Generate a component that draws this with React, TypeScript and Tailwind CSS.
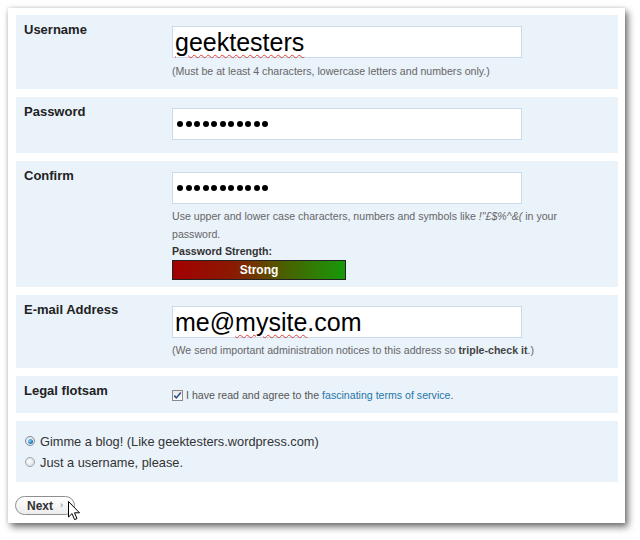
import React from 'react';

const font = { fontFamily: '"Liberation Sans", Arial, sans-serif' };

const Dots = ({ count }: { count: number }) => (
     <div className="flex items-center gap-[2.5px] pl-[4px]">
          {Array.from({ length: count }).map((_, i) => (
               <span key={i} className="block h-[6px] w-[6px] rounded-full bg-black" />
          ))}
     </div>
);

const Field = ({ children }: { children: React.ReactNode }) => (
     <div className="flex h-[32px] w-[350px] items-center border border-[#c9dbea] bg-white">
          {children}
     </div>
);

const Section = ({
     label,
     height,
     children,
}: {
     label?: string;
     height: string;
     children: React.ReactNode;
}) => (
     <div className={`flex bg-[#eaf2fa] pt-[10px] ${height}`}>
          {label !== undefined && (
               <div className="-mt-[3px] w-[156px] pl-[8px] text-[13px] font-bold leading-[15px] text-[#222]">
                    {label}
               </div>
          )}
          <div className="flex flex-col pt-[1px]">{children}</div>
     </div>
);

const Squiggle = ({ children }: { children: React.ReactNode }) => (
     <span className="underline decoration-[#e23c3c] decoration-wavy decoration-[1px] underline-offset-[3px]">
          {children}
     </span>
);

export default function App() {
     return (
          <div className="h-[540px] w-[640px] bg-white pl-[8px] pt-[8px]" style={font}>
               <div className="h-[515px] w-[617px] bg-white pl-[8px] pr-[7px] pt-[7px] shadow-[3px_4px_7px_rgba(0,0,0,0.55),0_0_4px_rgba(0,0,0,0.15)]">
                    <div className="flex flex-col gap-[8px]">
                         <Section label="Username" height="h-[74px]">
                              <Field>
                                   <span className="pl-[2px] text-[25px] leading-none text-black">
                                        <Squiggle>geektesters</Squiggle>
                                   </span>
                              </Field>
                              <p className="mt-[4px] text-[10.6px] leading-[18px] text-[#666]">
                                   (Must be at least 4 characters, lowercase letters and numbers only.)
                              </p>
                         </Section>

                         <Section label="Password" height="h-[56px]">
                              <Field>
                                   <Dots count={11} />
                              </Field>
                         </Section>

                         <Section label="Confirm" height="h-[126px]">
                              <Field>
                                   <Dots count={11} />
                              </Field>
                              <p className="mt-[3px] text-[10.6px] leading-[18px] text-[#666]">
                                   Use upper and lower case characters, numbers and symbols like{' '}
                                   <i>!"£$%^&amp;(</i> in your
                                   <br />
                                   password.
                              </p>
                              <p className="text-[10.6px] font-bold leading-[17px] text-[#333]">
                                   Password Strength:
                              </p>
                              <div className="flex h-[20px] w-[174px] items-center justify-center border border-[#222] bg-[linear-gradient(to_right,#a30000_0%,#8a1a00_35%,#4a6000_65%,#169a08_100%)] text-[12px] font-bold text-white">
                                   Strong
                              </div>
                         </Section>

                         <Section label="E-mail Address" height="h-[73px]">
                              <Field>
                                   <span className="pl-[2px] text-[25px] leading-none text-black">
                                        me@<Squiggle>mysite</Squiggle>.com
                                   </span>
                              </Field>
                              <p className="mt-[3px] text-[10.6px] leading-[18px] text-[#666]">
                                   (We send important administration notices to this address so{' '}
                                   <b className="text-[#444]">triple-check it</b>.)
                              </p>
                         </Section>

                         <Section label="Legal flotsam" height="h-[37px]">
                              <div className="flex items-center pt-[1px]">
                                   <span className="flex h-[11px] w-[11px] items-center justify-center border border-[#8a8a8a] bg-[linear-gradient(#e8e8e8,#ffffff)]">
                                        <svg width="9" height="9" viewBox="0 0 9 9">
                                             <path d="M1.2 4.6 L3.4 6.9 L7.8 1.6" fill="none" stroke="#2b4f8e" strokeWidth="1.6" />
                                        </svg>
                                   </span>
                                   <span className="ml-[3px] text-[10.6px] leading-[14px] text-[#555]">
                                        I have read and agree to the{' '}
                                        <span className="text-[#2676a8]">fascinating terms of service</span>.
                                   </span>
                              </div>
                         </Section>

                         <div className="flex h-[61px] flex-col justify-center gap-[6px] bg-[#eaf2fa] pl-[9px] text-[12.8px] leading-[15px] text-[#333]">
                              <label className="flex items-center gap-[5px]">
                                   <span className="flex h-[10px] w-[10px] items-center justify-center rounded-full border border-[#7d8d9c] bg-[radial-gradient(circle,#ffffff,#d8dde2)]">
                                        <span className="h-[5px] w-[5px] rounded-full bg-[radial-gradient(circle_at_35%_35%,#7fd0ff,#0a4f8f)]" />
                                   </span>
                                   Gimme a blog! (Like geektesters.wordpress.com)
                              </label>
                              <label className="flex items-center gap-[5px]">
                                   <span className="h-[10px] w-[10px] rounded-full border border-[#9aa3ab] bg-[radial-gradient(circle_at_40%_40%,#ffffff,#d0d4d8)]" />
                                   Just a username, please.
                              </label>
                         </div>
                    </div>

                    <div className="relative ml-[-1px] mt-[14px] w-max">
                         <button className="flex h-[19px] w-[60px] items-center rounded-full border border-[#8f8f8f] bg-[linear-gradient(#ffffff,#ececec)] pl-[11px] text-[12px] font-bold text-[#333]">
                              Next
                              <span className="ml-[7px] text-[9px] font-normal text-[#777]">›</span>
                         </button>
                         <svg className="absolute left-[53px] top-[5px]" width="13" height="20" viewBox="0 0 13 20">
                              <path d="M0.5 0.5 L0.5 16 L4 12.6 L6.6 18.6 L9 17.6 L6.5 11.8 L11.5 11.8 Z" fill="#ffffff" stroke="#000" strokeWidth="1" strokeLinejoin="round" />
                         </svg>
                    </div>
               </div>
          </div>
     );
}
